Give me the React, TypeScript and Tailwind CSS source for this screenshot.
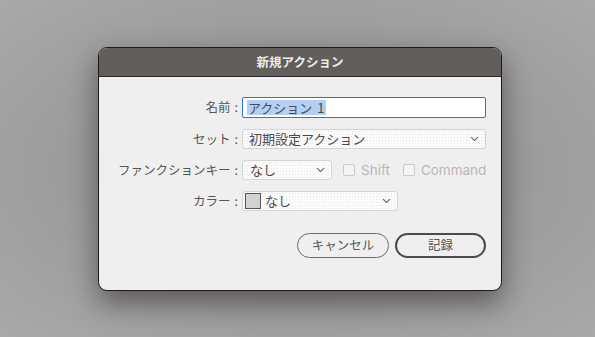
import React from "react";

const dots = {
  backgroundColor: "#fbfbfb",
  backgroundImage: "radial-gradient(#e6e6e6 0.6px, transparent 0.7px)",
  backgroundSize: "3px 3px",
};

function Chevron() {
  return (
    <svg width="9" height="6" viewBox="0 0 9 6" className="shrink-0">
      <path d="M1 1.2 L4.5 4.5 L8 1.2" fill="none" stroke="#6a6a6a" strokeWidth="1.1" />
    </svg>
  );
}

function Label({ children }: { children: React.ReactNode }) {
  return (
    <div className="w-[143px] shrink-0 text-right text-[12.5px] leading-none text-[#555] pr-[4px]">
      {children}
      <span className="ml-[4px]">:</span>
    </div>
  );
}

function Check({ label }: { label: string }) {
  return (
    <div className="flex items-center gap-[6px]">
      <div className="w-[12px] h-[12px] border border-[#c9c9c9] rounded-[2px] bg-[#f4f4f4]" />
      <span className="text-[13.5px] text-[#b8b8b8]" style={{ fontFamily: "Inter, 'Noto Sans', sans-serif" }}>{label}</span>
    </div>
  );
}

export default function App() {
  return (
    <div
      className="w-[595px] h-[337px] overflow-hidden pl-[98px] pt-[47px]"
      style={{
        background: "radial-gradient(ellipse at 50% 50%, #8a8a8a 0%, #9c9c9c 55%, #a9a9a9 100%)",
        fontFamily: "'Noto Sans CJK JP', 'Noto Sans', sans-serif",
      }}
    >
      <div className="w-[404px] h-[244px] rounded-[9px] border border-[#1c1c1c] overflow-hidden bg-[#efefef] shadow-[0_12px_28px_rgba(40,30,30,0.55)] flex flex-col">
        <div className="h-[29px] bg-[#625e5c] border-b border-[#2a2a2a] flex items-center justify-center text-[12.5px] font-bold text-[#ececec]">
          新規アクション
        </div>
        <div className="flex flex-col pt-[20px]">
          <div className="flex items-center h-[21px]">
            <Label>名前</Label>
            <div className="w-[244px] h-[21px] bg-white border-[1.5px] border-[#2a74d8] rounded-[2px] flex items-center px-[4px]">
              <span className="bg-[#b2d0f5] text-[#4a4a4a] text-[13px] leading-[15px] px-[1px]">アクション<span className="ml-[5px]">1</span></span>
            </div>
          </div>
          <div className="flex items-center h-[20px] mt-[11px]">
            <Label>セット</Label>
            <div className="w-[244px] h-[20px] border border-[#d4d4d4] rounded-[3px] flex items-center justify-between pl-[6px] pr-[6px]" style={dots}>
              <span className="text-[13px] text-[#4a4a4a]">初期設定アクション</span>
              <Chevron />
            </div>
          </div>
          <div className="flex items-center h-[20px] mt-[11px]">
            <Label>ファンクションキー</Label>
            <div className="w-[90px] h-[20px] border border-[#d4d4d4] rounded-[3px] flex items-center justify-between pl-[7px] pr-[6px]" style={dots}>
              <span className="text-[13px] text-[#4a4a4a]">なし</span>
              <Chevron />
            </div>
            <div className="ml-[11px] flex items-center gap-[13px]">
              <Check label="Shift" />
              <Check label="Command" />
            </div>
          </div>
          <div className="flex items-center h-[20px] mt-[11px]">
            <Label>カラー</Label>
            <div className="w-[156px] h-[20px] border border-[#d4d4d4] rounded-[3px] flex items-center justify-between pl-[2px] pr-[6px]" style={dots}>
              <div className="flex items-center gap-[4px]">
                <div className="w-[16px] h-[16px] border border-[#555] bg-[#d2d2d2]" />
                <span className="text-[13px] text-[#4a4a4a]">なし</span>
              </div>
              <Chevron />
            </div>
          </div>
          <div className="flex justify-end gap-[6px] pr-[15px] mt-[22px]">
            <div className="w-[92px] h-[25px] rounded-full border border-[#6b6b6b] flex items-center justify-center text-[12.5px] text-[#555]">
              キャンセル
            </div>
            <div className="w-[91px] h-[25px] rounded-full border-2 border-[#4a4a4a] flex items-center justify-center text-[12.5px] text-[#555]">
              記録
            </div>
          </div>
        </div>
      </div>
    </div>
  );
}
